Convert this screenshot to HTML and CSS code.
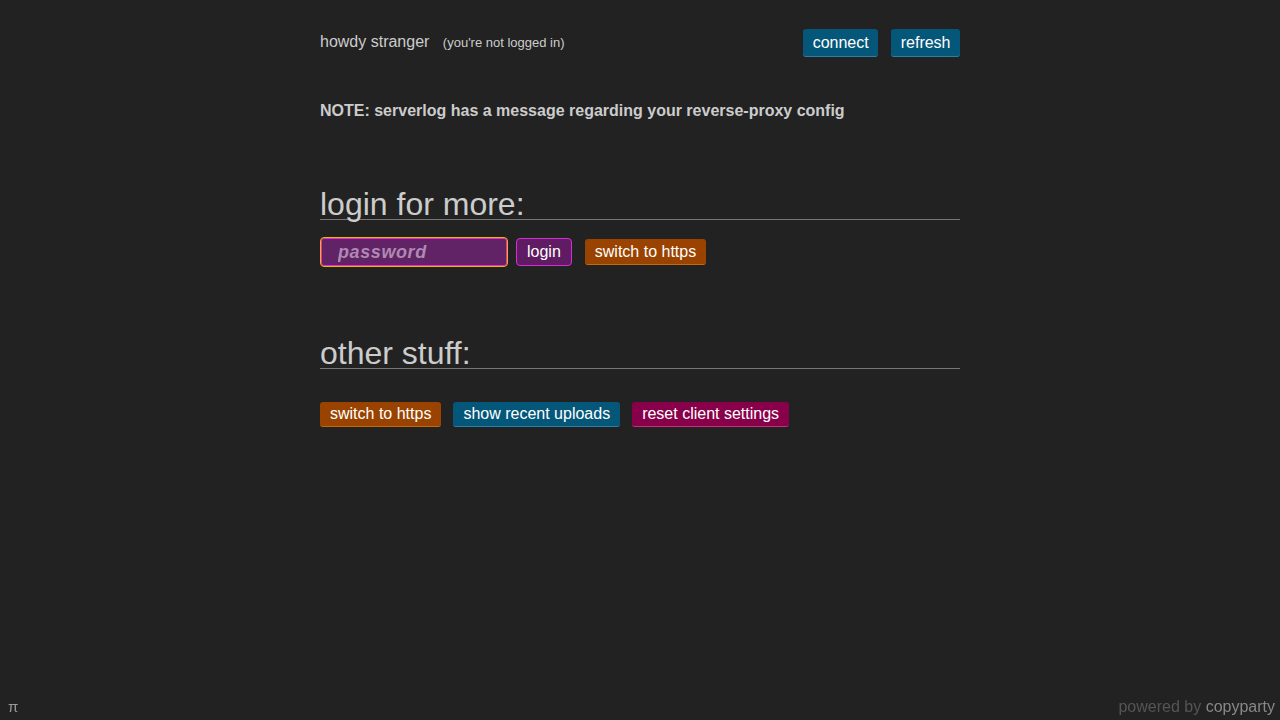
FILE: index.html
```html
<!DOCTYPE html>
<html lang="en">
<head>
    <meta charset="UTF-8">
    <meta name="viewport" content="width=device-width, initial-scale=1.0">
    <title>copyparty</title>
    <link rel="stylesheet" href="styles.css">
</head>
<body>
    <div id="wrap">
        <div class="top">
            <p class="hello">howdy stranger <span class="sub">(you're not logged in)</span></p>
            <div class="btns">
                <a href="#" class="btn">connect</a>
                <a href="#" class="btn">refresh</a>
            </div>
        </div>

        <p class="note">NOTE: serverlog has a message regarding your reverse-proxy config</p>

        <h1>login for more:</h1>
        <form class="login" onsubmit="return false">
            <input type="password" class="pw" placeholder="password">
            <button class="go">login</button>
            <a href="#" class="btn https">switch to https</a>
        </form>

        <h1 class="other">other stuff:</h1>
        <div class="stuff">
            <a href="#" class="btn https">switch to https</a>
            <a href="#" class="btn">show recent uploads</a>
            <a href="#" class="btn reset">reset client settings</a>
        </div>
    </div>

    <div class="footer">
        <span class="pi">π</span>
        <span class="pow">powered by <b>copyparty</b></span>
    </div>
</body>
</html>
```

FILE: styles.css
```css
html, body {
    margin: 0;
    height: 100%;
}

body {
    background: #222;
    color: #ccc;
    font-family: "Liberation Sans", Arial, sans-serif;
    font-size: 16px;
}

#wrap {
    width: 640px;
    margin: 0 auto;
    padding-top: 29px;
}

.top {
    display: flex;
    justify-content: space-between;
    align-items: center;
}

.hello {
    margin: 0 0 2px;
}

.hello .sub {
    font-size: 13px;
    margin-left: 9px;
}

.btns {
    display: flex;
    gap: 13px;
}

.btns .btn {
    padding-left: 9.5px;
    padding-right: 9.5px;
}

/* buttons */
.btn {
    display: inline-block;
    color: #fff;
    background: #05577a;
    border-bottom: 1px solid #2d7fa8;
    border-radius: 3px;
    padding: 5px 10px 4px;
    line-height: 18px;
    text-decoration: none;
}

.btn.https {
    background: #9a4300;
    border-color: #c26a0c;
}

.btn.reset {
    background: #88004a;
    border-color: #c8307c;
}

.note {
    font-weight: bold;
    font-size: 16px;
    margin: 45px 0 0;
}

h1 {
    font-weight: normal;
    font-size: 32px;
    line-height: 30px;
    margin: 69px 0 0;
    border-bottom: 1px solid #777;
}

h1.other {
    margin-top: 72px;
}

.login {
    display: flex;
    align-items: center;
    margin-top: 18px;
}

.pw {
    width: 186px;
    height: 28px;
    box-sizing: border-box;
    background: #612266;
    border: 1px solid #e030c8;
    outline: 1px solid #f5b400;
    border-radius: 3px;
    padding: 0 16px;
    margin: 0 9px 0 1px;
    font-family: inherit;
    font-size: 18px;
    font-style: italic;
    font-weight: bold;
    letter-spacing: 0.6px;
    color: #fff;
}

.pw::placeholder {
    color: #ad8ab2;
}

.go {
    background: #5f1c63;
    color: #fff;
    border: 1px solid #d62cd6;
    border-radius: 4px;
    font-family: inherit;
    font-size: 16px;
    height: 28px;
    padding: 0 10px;
    margin-right: 13px;
}

.login .https {
    padding: 4px 10px 3px;
}

.stuff {
    display: flex;
    gap: 12px;
    margin-top: 33px;
}

.stuff .btn {
    padding: 3px 10px 3px;
}

.footer {
    position: fixed;
    left: 0;
    right: 0;
    bottom: 4px;
    display: flex;
    justify-content: space-between;
    padding: 0 5px 0 8px;
    font-size: 16px;
}

.pi {
    color: #999;
    font-size: 15px;
}

.pow {
    color: #555;
}

.pow b {
    font-weight: normal;
    color: #888;
}
```
